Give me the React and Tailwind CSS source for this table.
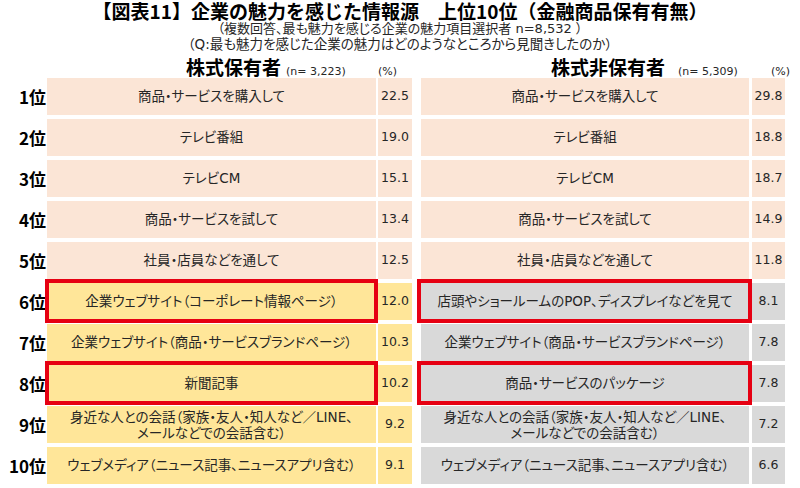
import React from "react";

const JP = { fontFamily: '"Noto Sans CJK JP", sans-serif' };
const MIX = { fontFamily: '"DejaVu Sans", "Noto Sans CJK JP", sans-serif' };

const left = [
  ["商品・サービスを購入して", "22.5"],
  ["テレビ番組", "19.0"],
  ["テレビCM", "15.1"],
  ["商品・サービスを試して", "13.4"],
  ["社員・店員などを通して", "12.5"],
  ["企業ウェブサイト（コーポレート情報ページ）", "12.0", true],
  ["企業ウェブサイト（商品・サービスブランドページ）", "10.3"],
  ["新聞記事", "10.2", true],
  [["身近な人との会話（家族・友人・知人など／LINE、", "メールなどでの会話含む）"], "9.2"],
  ["ウェブメディア（ニュース記事、ニュースアプリ含む）", "9.1"],
];

const right = [
  ["商品・サービスを購入して", "29.8"],
  ["テレビ番組", "18.8"],
  ["テレビCM", "18.7"],
  ["商品・サービスを試して", "14.9"],
  ["社員・店員などを通して", "11.8"],
  ["店頭やショールームのPOP、ディスプレイなどを見て", "8.1", true],
  ["企業ウェブサイト（商品・サービスブランドページ）", "7.8"],
  ["商品・サービスのパッケージ", "7.8", true],
  [["身近な人との会話（家族・友人・知人など／LINE、", "メールなどでの会話含む）"], "7.2"],
  ["ウェブメディア（ニュース記事、ニュースアプリ含む）", "6.6"],
];

function Label({ text }) {
  if (Array.isArray(text)) {
    return (
      <div className="flex flex-col items-center leading-[16px]">
        <span>{text[0]}</span>
        <span>{text[1]}</span>
      </div>
    );
  }
  return <span>{text}</span>;
}

export default function App() {
  return (
    <div className="w-[800px] h-[488px] bg-white text-[#262626] overflow-hidden" style={JP}>
      <div className="text-center text-[19px] leading-[20px] h-[21px] pt-[1px] font-bold text-black whitespace-nowrap">
        【図表11】企業の魅力を感じた情報源　上位10位（金融商品保有有無）
      </div>
      <div className="text-center text-[13px] leading-[15px] h-[15px] whitespace-nowrap [font-feature-settings:'palt']" style={MIX}>
        （複数回答、最も魅力を感じる企業の魅力項目選択者 n=8,532 ）
      </div>
      <div className="text-center text-[13.5px] leading-[16px] h-[16px] whitespace-nowrap [font-feature-settings:'palt']" style={MIX}>
        （Q:最も魅力を感じた企業の魅力はどのようなところから見聞きしたのか）
      </div>
      <div className="flex items-baseline h-[26px] pt-[4px]">
        <div className="w-[186px] shrink-0" />
        <div className="w-[192px] shrink-0 flex items-baseline whitespace-nowrap">
          <span className="text-[19px] leading-[21px] font-bold text-black">株式保有者</span>
          <span className="ml-[5px] text-[11px]" style={MIX}>(n= 3,223)</span>
        </div>
        <div className="w-[173px] shrink-0 text-[11px]" style={MIX}>(%)</div>
        <div className="w-[220px] shrink-0 flex items-baseline whitespace-nowrap">
          <span className="text-[19px] leading-[21px] font-bold text-black">株式非保有者</span>
          <span className="ml-[13px] text-[11px]" style={MIX}>(n= 5,309)</span>
        </div>
        <div className="text-[11px]" style={MIX}>(%)</div>
      </div>
      <div className="flex flex-col gap-[4px]">
        {left.map((l, i) => {
          const r = right[i];
          const top = i < 5;
          const lbg = top ? "bg-[#fbe5d6]" : "bg-[#ffe699]";
          const rbg = top ? "bg-[#fbe5d6]" : "bg-[#d9d9d9]";
          return (
            <div key={i} className="flex h-[37px]">
              <div className="w-[47px] shrink-0 flex items-center justify-end pr-[1px] text-[17px] font-bold text-black">
                {i + 1}位
              </div>
              <div className={`relative w-[329px] shrink-0 flex items-center justify-center text-[13.5px] whitespace-nowrap [font-feature-settings:'palt'] ${lbg}`} style={MIX}>
                <Label text={l[0]} />
                {l[2] && (
                  <div className="absolute -top-[4px] -bottom-[3px] -left-[2px] -right-[2px] border-[4px] border-[#e60012] z-10" />
                )}
              </div>
              <div className={`ml-[2px] w-[34px] shrink-0 flex items-center justify-center text-[12.5px] ${lbg}`} style={MIX}>
                {l[1]}
              </div>
              <div className={`relative ml-[9px] w-[328px] shrink-0 flex items-center justify-center text-[13.5px] whitespace-nowrap [font-feature-settings:'palt'] ${rbg}`} style={MIX}>
                <Label text={r[0]} />
                {r[2] && (
                  <div className="absolute -top-[4px] -bottom-[3px] -left-[4px] -right-[3px] border-[4px] border-[#e60012] z-10" />
                )}
              </div>
              <div className={`ml-[3px] w-[33px] shrink-0 flex items-center justify-center text-[12.5px] ${rbg}`} style={MIX}>
                {r[1]}
              </div>
            </div>
          );
        })}
      </div>
    </div>
  );
}
